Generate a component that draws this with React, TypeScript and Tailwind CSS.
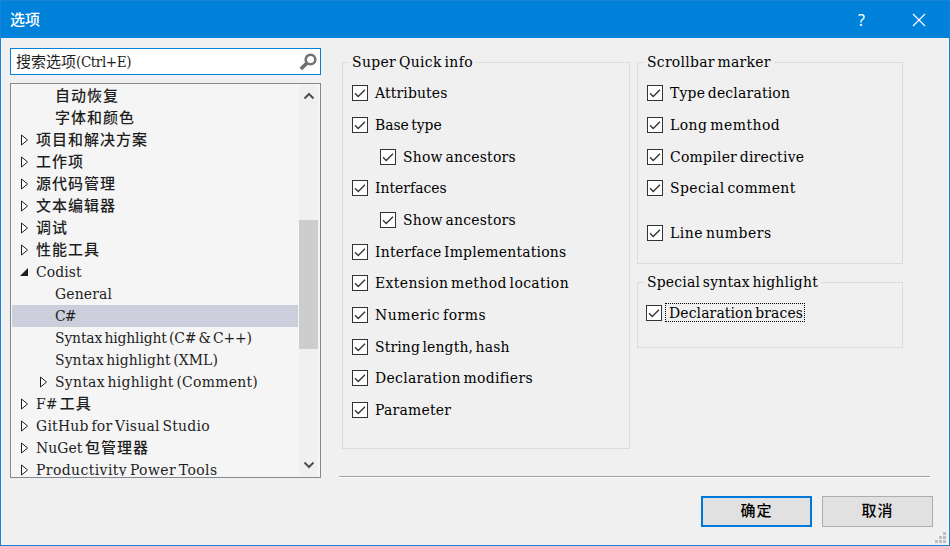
import React from 'react';

type TreeItem = { label: string; level: 0 | 1; state?: 'closed' | 'open'; selected?: boolean; cls: string; suffix?: string };

const CJK = 'text-[15px] font-medium tracking-[1px]';

const tree: TreeItem[] = [
  { label: '自动恢复', level: 1, cls: CJK },
  { label: '字体和颜色', level: 1, cls: CJK },
  { label: '项目和解决方案', level: 0, state: 'closed', cls: CJK },
  { label: '工作项', level: 0, state: 'closed', cls: CJK },
  { label: '源代码管理', level: 0, state: 'closed', cls: CJK },
  { label: '文本编辑器', level: 0, state: 'closed', cls: CJK },
  { label: '调试', level: 0, state: 'closed', cls: CJK },
  { label: '性能工具', level: 0, state: 'closed', cls: CJK },
  { label: 'Codist', level: 0, state: 'open', cls: 'tracking-[0.1px]' },
  { label: 'General', level: 1, cls: 'tracking-[0.14px]' },
  { label: 'C#', level: 1, selected: true, cls: 'tracking-[-0.8px]' },
  { label: 'Syntax highlight (C# & C++)', level: 1, cls: 'tracking-[-0.17px]' },
  { label: 'Syntax highlight (XML)', level: 1, cls: 'tracking-[0.08px]' },
  { label: 'Syntax highlight (Comment)', level: 1, state: 'closed', cls: 'tracking-[0.27px]' },
  { label: 'F# ', suffix: '工具', level: 0, state: 'closed', cls: 'tracking-[0px]' },
  { label: 'GitHub for Visual Studio', level: 0, state: 'closed', cls: 'tracking-[0.25px]' },
  { label: 'NuGet ', suffix: '包管理器', level: 0, state: 'closed', cls: 'tracking-[0.05px]' },
  { label: 'Productivity Power Tools', level: 0, state: 'closed', cls: 'tracking-[0.42px]' },
];

function Arrow({ state }: { state?: 'closed' | 'open' }) {
  return (
    <svg width="10" height="12" viewBox="0 0 10 12" className="shrink-0">
      {state === 'closed' && <path d="M1.5 1v10L7.5 6z" fill="#fff" stroke="#1e1e1e" strokeWidth="1" />}
      {state === 'open' && <path d="M8 2v8H0z" fill="#1e1e1e" />}
    </svg>
  );
}

function TreeRow({ item }: { item: TreeItem }) {
  return (
    <div
      className={`flex h-[22px] shrink-0 items-center gap-[6px] whitespace-nowrap ${item.level ? 'pl-[27px]' : 'pl-2'} ${item.selected ? 'bg-[#cccedb]' : ''}`}
    >
      <Arrow state={item.state} />
      <span className={`pt-px leading-[21px] whitespace-pre ${item.cls}`}>
        {item.label}
        {item.suffix && <span className="text-[15px] font-medium tracking-[1px]">{item.suffix}</span>}
      </span>
    </div>
  );
}

function Check() {
  return (
    <span className="flex size-4 shrink-0 items-center justify-center border border-[#333] bg-white">
      <svg width="14" height="14" viewBox="0 0 14 14">
        <path d="M2 7.3L5.2 10.5L12 3.7" fill="none" stroke="#333" strokeWidth="1.3" />
      </svg>
    </span>
  );
}

function Option({ label, cls, indent }: { label: string; cls: string; indent?: boolean }) {
  return (
    <label className={`flex h-[31.7px] items-start gap-[7px] ${indent ? 'pl-7' : ''}`}>
      <Check />
      <span className={`leading-4 whitespace-nowrap ${cls}`}>{label}</span>
    </label>
  );
}

function Group({ title, titleCls, className, children }: { title: string; titleCls: string; className: string; children: React.ReactNode }) {
  return (
    <fieldset className={`border border-[#dcdcdc] ${className}`}>
      <legend className={`ml-[6px] h-[21px] px-[3px] leading-[20px] whitespace-nowrap ${titleCls}`}>{title}</legend>
      {children}
    </fieldset>
  );
}

export default function App() {
  return (
    <div className="flex h-[546px] w-[950px] flex-col overflow-hidden border border-[#1883d7] bg-[#f0f0f0] font-['DejaVu_Serif_Condensed','DejaVu_Serif','Noto_Sans_CJK_SC',serif] text-[15.5px] text-[#1e1e1e] [font-stretch:condensed] [word-spacing:-2px]">
      <header className="flex h-[37px] shrink-0 items-center bg-[#0081da] pl-[9px] text-white">
        <h1 className="flex-1 font-['Noto_Sans_CJK_SC',sans-serif] text-[15px] font-medium">选项</h1>
        <button className="w-[58px] pr-px text-center font-['Noto_Sans',sans-serif] text-[16px] [font-stretch:normal]">?</button>
        <button className="flex w-[58px] justify-center">
          <svg width="14" height="14" viewBox="0 0 14 14" className="mr-[3px]">
            <path d="M1 1L13 13M13 1L1 13" stroke="#fff" strokeWidth="1.2" />
          </svg>
        </button>
      </header>

      <main className="flex h-[440px] shrink-0 pl-[9px]">
        <aside className="flex w-[311px] shrink-0 flex-col pt-[10px]">
          <div className="flex h-[27px] shrink-0 items-center justify-between border border-[#0081da] bg-white pr-[3px] pl-[5px]">
            <span className="text-[15px] leading-5 tracking-[-0.4px]">
              <span className="tracking-normal">搜索选项</span>(Ctrl+E)
            </span>
            <svg width="18" height="18" viewBox="0 0 18 18">
              <circle cx="11.5" cy="6.5" r="4.8" fill="none" stroke="#717171" strokeWidth="2.6" />
              <path d="M8 10L1.8 16" stroke="#717171" strokeWidth="3.8" />
            </svg>
          </div>
          <div className="mt-2 flex h-[395px] shrink-0 border border-[#828790] bg-[#f5f5f5] py-px pr-[2px] pl-px">
            <div className="flex w-[286px] flex-col overflow-hidden">
              {tree.map((item, i) => (
                <TreeRow key={i} item={item} />
              ))}
            </div>
            <div className="ml-px flex w-[19px] flex-col items-center bg-[#f0f0f0]">
              <svg width="12" height="8" viewBox="0 0 12 8" className="mt-[7px] shrink-0">
                <path d="M1.5 6.5L6 2l4.500 4.500" fill="none" stroke="#505050" strokeWidth="2" />
              </svg>
              <div className="mt-[120px] h-[129px] w-full shrink-0 bg-[#cdcdcd]" />
              <svg width="12" height="8" viewBox="0 0 12 8" className="mt-[112px] shrink-0">
                <path d="M1.500 1.500L6 6l4.500-4.500" fill="none" stroke="#505050" strokeWidth="2" />
              </svg>
            </div>
          </div>
        </aside>

        <section className="ml-[18px] flex w-[591px] shrink-0 flex-col border-b border-white">
          <div className="flex flex-1 items-start gap-[7px] border-b border-[#a0a0a0] pt-[14px] pl-[3px] text-black">
            <Group title="Super Quick info" titleCls="tracking-[0.35px]" className="h-[397px] w-[288px]">
              <div className="flex flex-col pt-[12.15px] pl-[9px]">
                <Option label="Attributes" cls="tracking-[0.15px]" />
                <Option label="Base type" cls="tracking-[-0.05px]" />
                <Option label="Show ancestors" cls="tracking-[0.23px]" indent />
                <Option label="Interfaces" cls="tracking-[0px]" />
                <Option label="Show ancestors" cls="tracking-[0.23px]" indent />
                <Option label="Interface Implementations" cls="tracking-[0.2px]" />
                <Option label="Extension method location" cls="tracking-[0.38px]" />
                <Option label="Numeric forms" cls="tracking-[0.5px]" />
                <Option label="String length, hash" cls="tracking-[0.13px]" />
                <Option label="Declaration modifiers" cls="tracking-[0.3px]" />
                <Option label="Parameter" cls="tracking-[0.25px]" />
              </div>
            </Group>
            <div className="flex w-[266px] flex-col gap-2">
              <Group title="Scrollbar marker" titleCls="tracking-[0.28px]" className="h-[212px]">
                <div className="flex flex-col pt-[12.15px] pl-[9px]">
                  <Option label="Type declaration" cls="tracking-[0.2px]" />
                  <Option label="Long memthod" cls="tracking-[0.47px]" />
                  <Option label="Compiler directive" cls="tracking-[0.25px]" />
                  <Option label="Special comment" cls="tracking-[0.4px]" />
                  <div className="mt-[13px]">
                    <Option label="Line numbers" cls="tracking-[0.5px]" />
                  </div>
                </div>
              </Group>
              <Group title="Special syntax highlight" titleCls="tracking-[0.2px]" className="h-[76px]">
                <label className="flex items-center gap-[3px] pt-[10px] pl-2">
                  <Check />
                  <span className="h-[19px] w-[140px] border border-dotted border-black pl-[3px] leading-[18px] tracking-[0.12px] whitespace-nowrap">
                    Declaration braces
                  </span>
                </label>
              </Group>
            </div>
          </div>
        </section>
      </main>

      <footer className="flex flex-1 items-start pt-[18px] pl-[700px] font-['Noto_Sans_CJK_SC',sans-serif] text-[15px] text-black">
        <button className="h-[31px] w-[111px] shrink-0 border-2 border-[#0078d7] bg-[#e1e1e1] pb-0.5 font-medium tracking-[1px]">确定</button>
        <button className="ml-[10px] h-[31px] w-[111px] shrink-0 border border-[#adadad] bg-[#e1e1e1] pb-0.5 font-medium tracking-[1px]">取消</button>
        <svg width="11" height="11" viewBox="0 0 11 11" className="mt-[36px] ml-[2px] shrink-0" fill="#bfbfbf">
          <path d="M8 0h3v3h-3zM4 4h3v3h-3zM8 4h3v3h-3zM0 8h3v3h-3zM4 8h3v3h-3zM8 8h3v3h-3z" />
        </svg>
      </footer>
    </div>
  );
}
